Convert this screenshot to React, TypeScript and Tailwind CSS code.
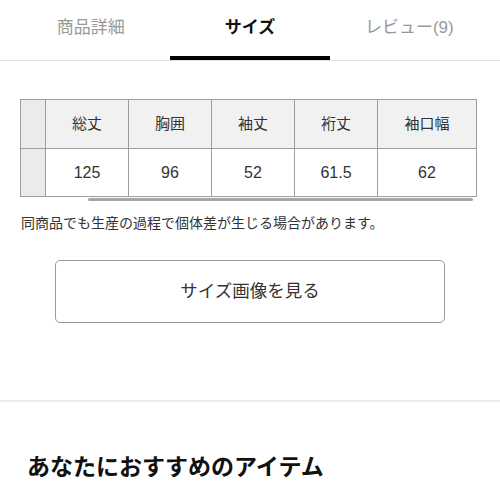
import React from 'react';

const tabs = ['商品詳細', 'サイズ', 'レビュー(9)'];
const heads = ['総丈', '胸囲', '袖丈', '裄丈', '袖口幅'];
const values = ['125', '96', '52', '61.5', '62'];

const App: React.FC = () => {
  return (
    <div className="w-[500px] h-[500px] overflow-hidden bg-white text-[#333]" style={{ fontFamily: '"Liberation Sans", "Noto Sans CJK JP", sans-serif' }}>
      <div className="border-b border-[#e2e2e2]">
        <div className="grid grid-cols-3 px-[11px]">
          {tabs.map((t, i) => (
            <div key={t} className={`h-[60px] flex items-center justify-center text-[17px] border-b-[4px] ${i === 1 ? 'font-bold text-[#111] border-black' : 'text-[#999] border-transparent'}`}>
              {t}
            </div>
          ))}
        </div>
      </div>

      <div className="pl-[20px] pt-[38px]">
        <div className="w-[458px]">
          <table className="border-collapse text-[15px] text-[#333]">
            <tbody>
              <tr className="h-[49px] bg-[#f1f1f1]">
                <td className="w-[25px] border border-[#9d9d9d] bg-[#ebebeb]"></td>
                {heads.map((h, i) => (
                  <td key={h} className={`border border-[#9d9d9d] text-center ${i === 4 ? 'w-[99px]' : 'w-[83px]'}`}>{h}</td>
                ))}
              </tr>
              <tr className="h-[48px] bg-white text-[16px]">
                <td className="border border-[#9d9d9d] bg-[#ebebeb]"></td>
                {values.map((v, i) => (
                  <td key={i} className="border border-[#9d9d9d] text-center">{v}</td>
                ))}
              </tr>
            </tbody>
          </table>
          <div className="ml-[68px] mt-[1px] w-[385px] h-[3px] bg-[#a5a5a5] rounded-sm"></div>
        </div>
      </div>

      <p className="pl-[21px] mt-[12px] text-[14px] leading-[20px] text-[#333]">同商品でも生産の過程で個体差が生じる場合があります。</p>

      <div className="px-[55px] mt-[27px]">
        <div className="h-[63px] border border-[#9a9a9a] rounded-[5px] flex items-center justify-center text-[17.5px] text-[#333]">
          サイズ画像を見る
        </div>
      </div>

      <div className="mt-[77px] border-t-[2px] border-[#ececec]"></div>

      <h2 className="pl-[27px] mt-[50px] text-[23px] font-bold text-[#111] leading-[30px]">あなたにおすすめのアイテム</h2>
    </div>
  );
};

export default App;
